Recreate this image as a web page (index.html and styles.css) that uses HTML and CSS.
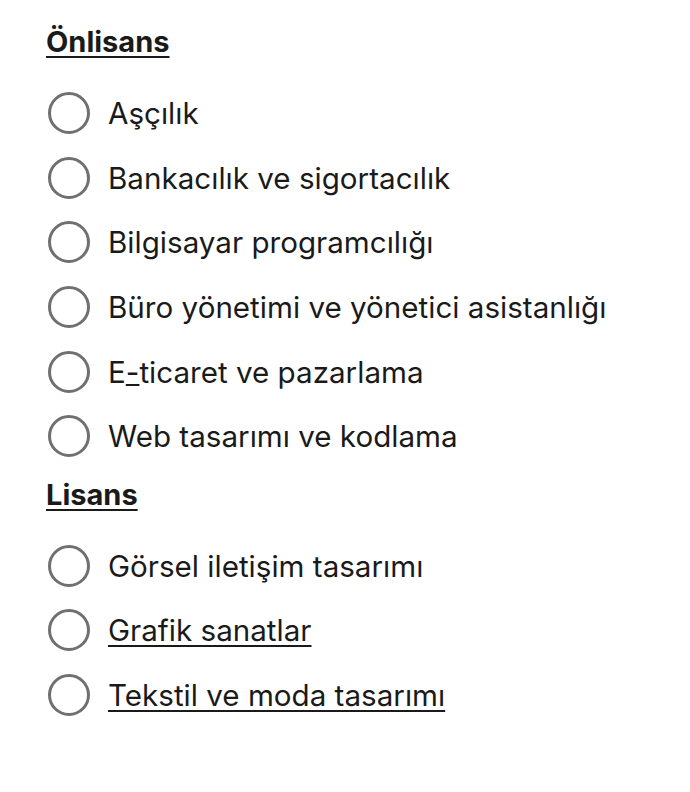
FILE: index.html
```html
<!DOCTYPE html>
<html lang="tr">
<head>
  <meta charset="UTF-8" />
  <meta name="viewport" content="width=device-width, initial-scale=1.0"/>
  <title>Bölümler</title>
  <link rel="stylesheet" href="styles.css">
</head>
<body>
  <div class="container">
    <h2 class="group-title">Önlisans</h2>
    <div class="options">
      <label class="option"><input type="radio" name="bolum"/><span class="radio"></span><span>Aşçılık</span></label>
      <label class="option"><input type="radio" name="bolum"/><span class="radio"></span><span>Bankacılık ve sigortacılık</span></label>
      <label class="option"><input type="radio" name="bolum"/><span class="radio"></span><span>Bilgisayar programcılığı</span></label>
      <label class="option"><input type="radio" name="bolum"/><span class="radio"></span><span>Büro yönetimi ve yönetici asistanlığı</span></label>
      <label class="option"><input type="radio" name="bolum"/><span class="radio"></span><span>E<u class="dash">-</u>ticaret ve pazarlama</span></label>
      <label class="option"><input type="radio" name="bolum"/><span class="radio"></span><span>Web tasarımı ve kodlama</span></label>
    </div>

    <h2 class="group-title">Lisans</h2>
    <div class="options">
      <label class="option"><input type="radio" name="bolum"/><span class="radio"></span><span>Görsel iletişim tasarımı</span></label>
      <label class="option"><input type="radio" name="bolum"/><span class="radio"></span><a href="#">Grafik sanatlar</a></label>
      <label class="option"><input type="radio" name="bolum"/><span class="radio"></span><a href="#">Tekstil ve moda tasarımı</a></label>
    </div>
  </div>
</body>
</html>
```

FILE: styles.css
```css
body {
  margin: 0;
  background: #fff;
  color: #1a1a1a;
  font-family: Inter, "Noto Sans", sans-serif;
}

.container {
  padding: 22px 0 0 46px;
}

.group-title {
  font-size: 29px;
  font-weight: 700;
  text-decoration: underline;
  text-decoration-thickness: 2px;
  text-underline-offset: 4px;
  margin: 0;
  line-height: 40px;
}

.options {
  display: flex;
  flex-direction: column;
  padding: 19px 0 6px;
}

.option {
  display: flex;
  align-items: center;
  gap: 18px;
  height: 64.6px;
  font-size: 29.6px;
  cursor: pointer;
}

.option input {
  display: none;
}

.radio {
  width: 36px;
  height: 36px;
  margin-left: 2px;
  border: 3px solid #707070;
  border-radius: 50%;
  flex-shrink: 0;
}

.option a {
  color: inherit;
  text-decoration: underline;
  text-decoration-thickness: 2px;
  text-underline-offset: 4px;
}

.dash {
  text-decoration-thickness: 2px;
}
```
